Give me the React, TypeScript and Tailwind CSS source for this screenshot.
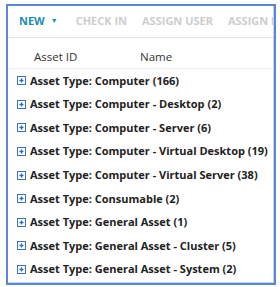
import React from "react"

const rows = [
  "Asset Type: Computer (166)",
  "Asset Type: Computer - Desktop (2)",
  "Asset Type: Computer - Server (6)",
  "Asset Type: Computer - Virtual Desktop (19)",
  "Asset Type: Computer - Virtual Server (38)",
  "Asset Type: Consumable (2)",
  "Asset Type: General Asset (1)",
  "Asset Type: General Asset - Cluster (5)",
  "Asset Type: General Asset - System (2)",
]

function PlusBox() {
  return (
    <svg width="9" height="9" viewBox="0 0 9 9" className="shrink-0">
      <rect x="0.5" y="0.5" width="8" height="8" fill="#ffffff" stroke="#3573c8" />
      <path d="M2.5 4.5h4M4.5 2.5v4" stroke="#2a6ac2" strokeWidth="1.3" />
    </svg>
  )
}

export default function App() {
  return (
    <div className="w-[280px] h-[287px] bg-white pt-[4px] pl-[6px] font-['Open_Sans',sans-serif]">
      <div className="w-[270px] h-[281px] border-2 border-[#5a87d5] overflow-hidden">
        <div className="h-full border-r border-b border-[#c5d6f2] overflow-hidden">
          {/* toolbar */}
          <div className="h-[32px] flex items-center pl-[11px] border-b border-[#e2e2e2] whitespace-nowrap text-[11px] font-bold overflow-hidden">
            <span className="text-[#1b8db3]">NEW</span>
            <span className="ml-[6px] text-[#1b8db3] text-[7px]">▼</span>
            <span className="ml-[18px] text-[#cdcdcd]">CHECK IN</span>
            <span className="ml-[15px] text-[#cdcdcd]">ASSIGN USER</span>
            <span className="ml-[15px] text-[#cdcdcd]">ASSIGN L</span>
          </div>
          {/* header */}
          <div className="h-[31px] flex items-center pt-[8px] text-[11.5px] text-[#333] border-b border-[#f0f0f0]">
            <span className="pl-[26px] w-[132px]">Asset ID</span>
            <span>Name</span>
          </div>
          {/* rows */}
          {rows.map((r) => (
            <div key={r} className="h-[23.6px] flex items-center pl-[9px] gap-[4px] whitespace-nowrap">
              <PlusBox />
              <span className="text-[11px] font-bold text-[#222]">{r}</span>
            </div>
          ))}
        </div>
      </div>
    </div>
  )
}
